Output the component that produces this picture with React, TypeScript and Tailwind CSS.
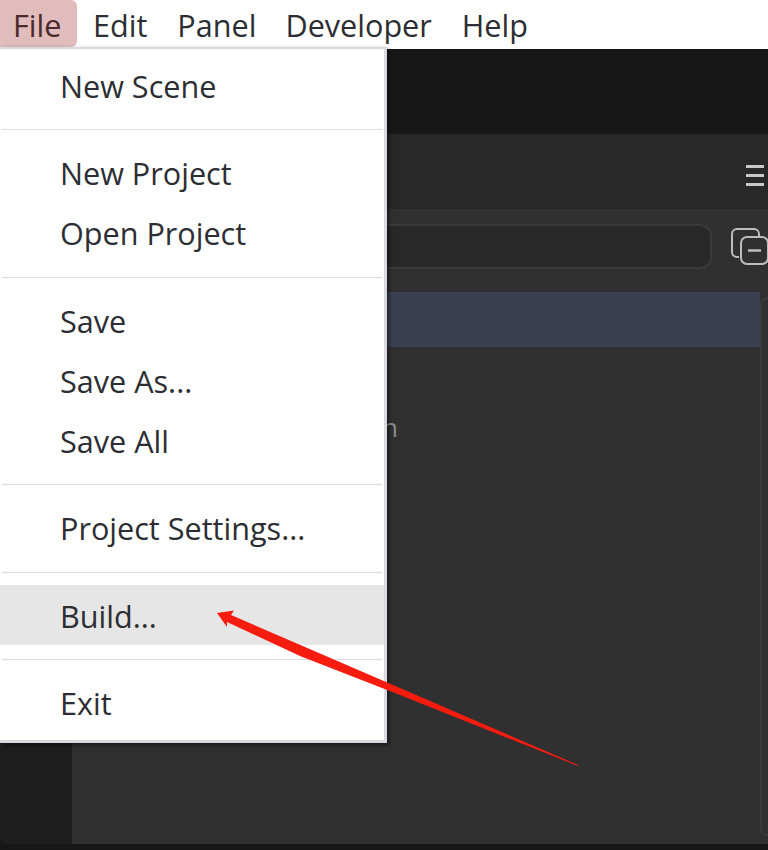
const menuBar = [
  { label: 'Edit', cls: 'pl-4 pr-[15px]' },
  { label: 'Panel', cls: 'pl-[15px] pr-[13px]' },
  { label: 'Developer', cls: 'pl-4 pr-[14px]' },
  { label: 'Help', cls: 'px-4' },
];

const menuGroups = [
  { items: ['New Scene'], sep: '' },
  { items: ['New Project', 'Open Project'], sep: 'h-[27px]' },
  { items: ['Save', 'Save As...', 'Save All'], sep: 'h-[28px]' },
  { items: ['Project Settings...'], sep: 'h-[27px]' },
  { items: ['Build...'], sep: 'h-[27px] pt-[2px]' },
  { items: ['Exit'], sep: 'h-[28px]' },
];

function FileMenu() {
  return (
    <div className="absolute left-0 top-[47px] w-[387px] h-[696px] bg-white border-t-2 border-r-[3px] border-b-[3px] border-[#d9d9df] pt-[7px] shadow-[2px_2px_4px_rgba(0,0,0,0.5)]">
      {menuGroups.map((group, i) => (
        <div key={i}>
          {i > 0 && (
            <div className={`flex items-center px-[2px] ${group.sep}`}>
              <div className="w-full h-px bg-[#dedede]" />
            </div>
          )}
          {group.items.map((label) => (
            <div
              key={label}
              className={`h-[60px] flex items-center pl-[60px] text-[30.6px] text-[#2c2e33] ${label === 'Build...' ? 'bg-[#e6e6e6] pt-1' : 'pt-[2px]'}`}
            >
              {label}
            </div>
          ))}
        </div>
      ))}
    </div>
  );
}

export default function App() {
  return (
    <div className="relative w-[768px] h-[850px] overflow-hidden bg-[#171717] font-['Open_Sans',sans-serif]">
      <div className="h-[49px] bg-white flex text-[30.6px] text-[#2c2e33]">
        <div className="h-[47px] w-[77px] pl-[13px] pt-[5px] flex items-center bg-[#e0bcbc] rounded-r-md text-[#4a2a2a]">File</div>
        {menuBar.map((item) => (
          <div key={item.label} className={`h-[47px] pt-[5px] flex items-center ${item.cls}`}>{item.label}</div>
        ))}
      </div>

      <div className="h-[85px]" />

      <div className="h-[75px] bg-[#282828] flex items-center justify-end pr-1 pt-[7px]">
        <div className="flex flex-col gap-[6px] w-[18px]">
          <div className="h-[3px] bg-[#c8c8c8]" />
          <div className="h-[3px] bg-[#c8c8c8]" />
          <div className="h-[3px] bg-[#c8c8c8]" />
        </div>
      </div>

      <div className="h-[635px] flex">
        <div className="w-[72px] bg-[#1e1e1e] rounded-bl-lg" />
        <div className="flex-1 bg-[#303030] flex flex-col">
          <div className="h-[83px] flex items-start pt-[15px]">
            <div className="w-[640px] h-[45px] bg-[#282828] border-2 border-[#3a3a3a] rounded-xl" />
            <svg className="ml-[18px] mt-[3px]" width="38" height="38" viewBox="0 0 38 38" fill="none" stroke="#bdbdbd" strokeWidth="2">
              <path d="M9 30 H7 a5 5 0 0 1 -5 -5 V7 a5 5 0 0 1 5 -5 H24 a5 5 0 0 1 5 5 V10" />
              <rect x="11" y="10" width="27" height="27" rx="6" />
              <path d="M18 23.5 H31" strokeWidth="2.5" />
            </svg>
          </div>
          <div className="flex-1 flex">
            <div className="flex-1 flex flex-col">
              <div className="h-[55px] bg-[#3a4050]" />
              <div className="h-[62px]" />
              <div className="pl-[310px] text-[26px] leading-[36px] text-[#8c8c8c]">n</div>
            </div>
            <div className="w-[8px] mt-[5px] mb-[8px] border-l-2 border-t-2 border-b-2 border-[#3a3a3a] rounded-l-lg" />
          </div>
        </div>
      </div>

      <FileMenu />

      {/* red annotation arrow */}
      <svg className="absolute left-0 top-0 pointer-events-none" width="768" height="850" viewBox="0 0 768 850">
        <path d="M217 613 L234 610.5 L231 615 L400 688 L578 765 L578 766 L400 695 L300 656 L227 622 L227 627 Z" fill="#f71c10" />
      </svg>
    </div>
  );
}
